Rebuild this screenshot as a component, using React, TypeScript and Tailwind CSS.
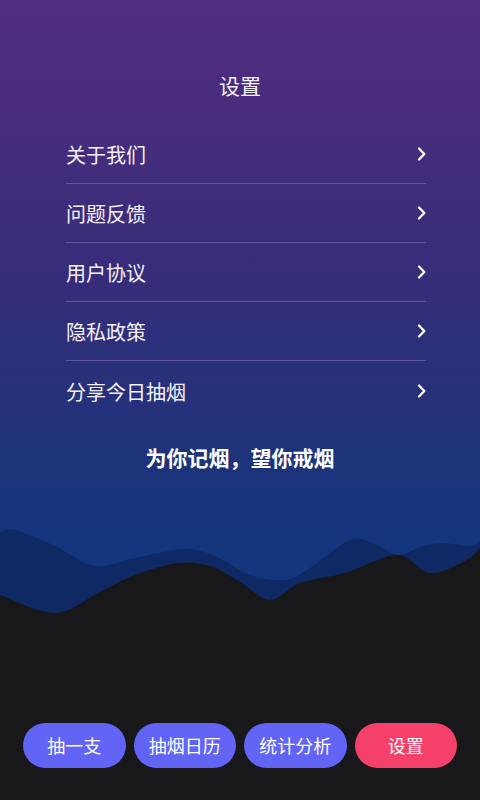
import React from "react";

const menuItems = ["关于我们", "问题反馈", "用户协议", "隐私政策", "分享今日抽烟"];

const tabs = [
  { label: "抽一支", active: false },
  { label: "抽烟日历", active: false },
  { label: "统计分析", active: false },
  { label: "设置", active: true },
];

// smooth path through points (catmull-rom -> bezier)
const smoothPath = (pts: number[][], bottom: number) => {
  let d = `M${pts[0][0]},${pts[0][1]}`;
  for (let i = 0; i < pts.length - 1; i++) {
    const p0 = pts[i - 1] || pts[i];
    const p1 = pts[i];
    const p2 = pts[i + 1];
    const p3 = pts[i + 2] || p2;
    const c1x = p1[0] + (p2[0] - p0[0]) / 6;
    const c1y = p1[1] + (p2[1] - p0[1]) / 6;
    const c2x = p2[0] - (p3[0] - p1[0]) / 6;
    const c2y = p2[1] - (p3[1] - p1[1]) / 6;
    d += ` C${c1x},${c1y} ${c2x},${c2y} ${p2[0]},${p2[1]}`;
  }
  d += ` L${pts[pts.length - 1][0]},${bottom} L${pts[0][0]},${bottom} Z`;
  return d;
};

const backWave = [
  [0, 12], [15, 10], [55, 26], [95, 46], [135, 38], [185, 29], [215, 36],
  [250, 55], [285, 60], [310, 48], [350, 20], [375, 24], [398, 35],
  [420, 27], [442, 23], [470, 26], [480, 22],
];

const frontWave = [
  [0, 75], [55, 93], [100, 72], [135, 55], [178, 43], [210, 46], [240, 62],
  [270, 80], [300, 63], [345, 53], [397, 35], [430, 53], [465, 41], [480, 28],
];

const Waves = () => (
  <svg width="480" height="100" viewBox="0 0 480 100" className="block">
    <path d={smoothPath(backWave, 100)} fill="#0e2862" fillOpacity="0.9" />
    <path d={smoothPath(frontWave, 100)} fill="#18171a" />
  </svg>
);

const Chevron = () => (
  <svg width="11" height="14" viewBox="0 0 11 14" fill="none">
    <path d="M4 1.5 L9.3 7 L4 12.5" stroke="#ffffff" strokeWidth="2.3" strokeLinecap="round" strokeLinejoin="round" />
  </svg>
);

export default function App() {
  return (
    <div
      className="w-[480px] h-[800px] flex flex-col bg-[#18171a] overflow-hidden"
      style={{ fontFamily: '"Noto Sans CJK SC", "Noto Sans", sans-serif' }}
    >
      {/* top gradient area */}
      <div className="flex flex-col bg-[linear-gradient(180deg,#532d80_0%,#3a2c7a_40%,#15357b_84%,#10367e_100%)]">
        <h1 className="pt-[70px] text-center text-[21px] leading-[30px] text-[#f4f1f8]">设置</h1>

        <ul className="mt-[25px] ml-[66px] mr-[54px]">
          {menuItems.map((item, i) => (
            <li
              key={item}
              className={`h-[59px] flex items-center justify-between ${
                i < menuItems.length - 1 ? "border-b border-[#7067b8]/70" : ""
              }`}
            >
              <span className="text-[20px] text-[#f4f1f8] pt-[2px]">{item}</span>
              <Chevron />
            </li>
          ))}
        </ul>

        <p className="mt-[22px] text-center text-[21px] leading-[30px] font-bold text-white">
          为你记烟，望你戒烟
        </p>

        <div className="mt-[48px]">
          <Waves />
        </div>
      </div>

      {/* bottom tabs */}
      <div className="flex-1 flex items-end px-[23px] pb-[32px]">
        <div className="w-full grid grid-cols-4 gap-2">
          {tabs.map((t) => (
            <button
              key={t.label}
              className={`h-[45px] rounded-full text-[18px] text-white ${
                t.active ? "bg-[#f5416a]" : "bg-[#6264f5]"
              }`}
            >
              {t.label}
            </button>
          ))}
        </div>
      </div>
    </div>
  );
}
